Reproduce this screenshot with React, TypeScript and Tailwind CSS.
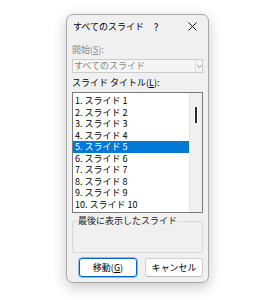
import React from "react";

const slides = Array.from({ length: 10 }, (_, i) => `${i + 1}. スライド ${i + 1}`);

const font = { fontFamily: '"Noto Sans CJK JP", "Noto Sans", sans-serif' };

export default function App() {
  return (
    <div className="w-[269px] h-[300px] bg-white pt-[14px] pl-[66px]" style={font}>
      <div className="w-[143px] h-[269px] flex flex-col bg-[#f0f0f0] border border-[#a8a8a8] rounded-[7px] shadow-[0_4px_14px_rgba(0,0,0,0.22)] text-[9px] leading-[12px] text-black">
        {/* title bar */}
        <div className="h-[23px] flex items-center pl-[6px] pr-[10px]">
          <span className="whitespace-nowrap">すべてのスライド</span>
          <span className="ml-auto w-[12px] text-center text-[10px]">?</span>
          <span className="ml-[24px] w-[12px] flex justify-center">
            <svg width="9" height="9" viewBox="0 0 9 9">
              <path d="M0.5 0.5 L8.5 8.5 M8.5 0.5 L0.5 8.5" stroke="#1a1a1a" strokeWidth="1" />
            </svg>
          </span>
        </div>

        <div className="flex flex-col px-[5px]">
          <div className="mt-[6px] h-[12px] text-[#8a8a8a]">
            開始(<span className="underline">S</span>):
          </div>

          <div className="mt-[3px] h-[14px] flex border border-[#cccccc] bg-[#f5f5f5] text-[#8a8a8a]">
            <span className="flex-1 pl-[1px] leading-[12px]">すべてのスライド</span>
            <span className="w-[7px] border-l border-[#dddddd] flex items-center justify-center">
              <svg width="5" height="3" viewBox="0 0 5 3">
                <path d="M0.5 0.5 L2.5 2.5 L4.5 0.5" stroke="#8a8a8a" strokeWidth="1" fill="none" />
              </svg>
            </span>
          </div>

          <div className="mt-[4px] h-[12px]">
            スライド タイトル(<span className="underline">L</span>):
          </div>

          <div className="mt-[3px] h-[121px] flex border border-[#7a7a7a] bg-white">
            <div className="flex-1 pt-[2px]">
              {slides.map((s, i) => (
                <div
                  key={s}
                  className={
                    "h-[11.5px] leading-[11.5px] pl-[2px] whitespace-nowrap " +
                    (i === 4 ? "bg-[#0078d7] text-white" : "")
                  }
                >
                  {s}
                </div>
              ))}
            </div>
            <div className="w-[13px] bg-[#f0f0f0] border-l border-[#e6e6e6] pt-[14px] flex justify-center">
              <div className="w-[4px] h-[16px] bg-white px-[1px]">
                <div className="w-[2px] h-full bg-[#2a2a2a]" />
              </div>
            </div>
          </div>

          <fieldset className="mt-[2px] h-[38px] border border-[#d8d8d8] rounded-[2px]">
            <legend className="ml-[4px] px-[1px] leading-[12px] text-[#222]">最後に表示したスライド</legend>
          </fieldset>

          <div className="mt-[5px] flex justify-end gap-[8px]">
            <button className="w-[58px] h-[19px] rounded-[3px] border border-[#0067c0] bg-[#fdfdfd] text-[9px] leading-[12px] outline outline-1 outline-[#0067c0]/40">
              移動(<span className="underline">G</span>)
            </button>
            <button className="w-[58px] h-[19px] rounded-[3px] border border-[#d0d0d0] border-b-[#b8b8b8] bg-[#fdfdfd] text-[9px] leading-[12px]">
              キャンセル
            </button>
          </div>
        </div>
      </div>
    </div>
  );
}
